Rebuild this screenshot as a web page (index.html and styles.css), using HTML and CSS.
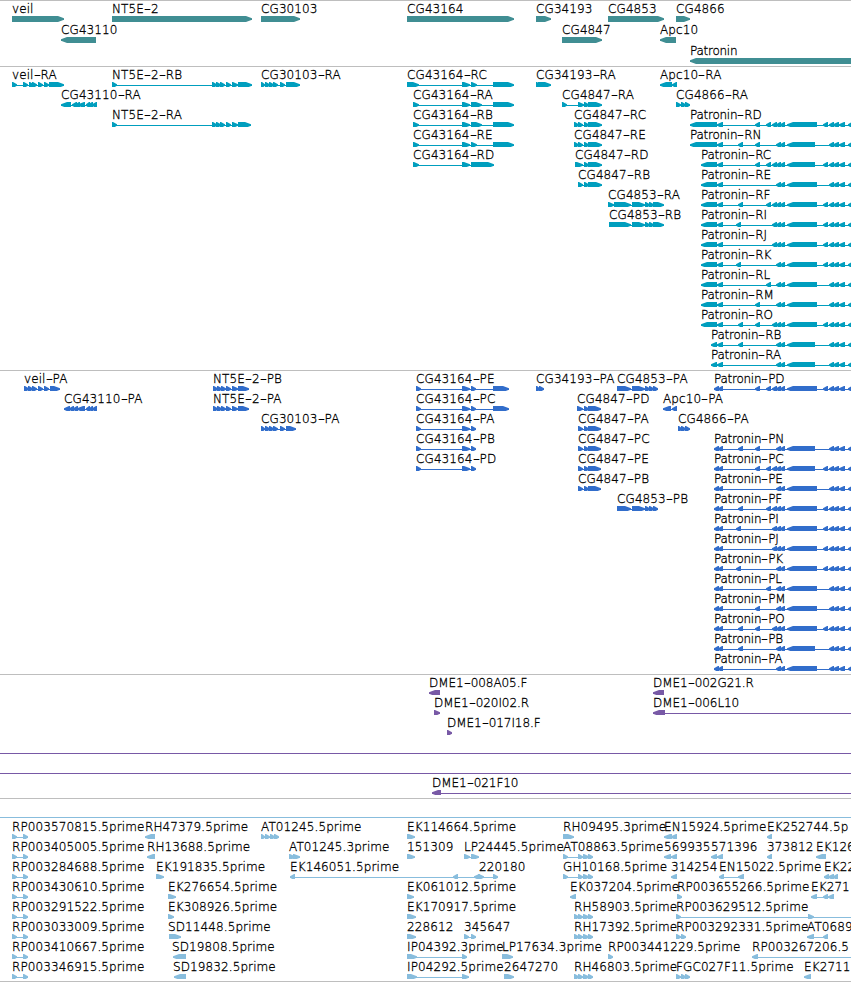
FILE: index.html
```html
<!DOCTYPE html>
<html lang="en">
<head>
  <meta charset="UTF-8">
  <meta name="viewport" content="width=device-width, initial-scale=1.0">
  <title>Genome Browser</title>
  <link rel="stylesheet" href="styles.css">
</head>
<body>
  <!-- One section per track, rows are filled in by tracks.js -->
  <main class="browser">
    <section class="track genes" id="genes"></section>
    <section class="track transcripts" id="transcripts"></section>
    <section class="track proteins" id="proteins"></section>
    <section class="track clones" id="clones"></section>
    <section class="track ests" id="ests"></section>
  </main>
  <script src="tracks.js"></script>
</body>
</html>
```
FILE: styles.css
```css
body {
  margin: 0;
  background-color: #fff;
  color: #000;
  font-family: "DejaVu Sans Light", "DejaVu Sans", sans-serif;
  font-size: 12px;
}

.browser {
  display: flex;
  flex-direction: column;
  overflow: hidden;
}

/* Tracks are split by a thin grey rule */
.track {
  border-top: 1px solid #bebebe;
  padding-bottom: 3px;
}

.genes {
  color: #408e93;
  padding-bottom: 2px;
}

.transcripts {
  color: #009ebe;
}

.proteins {
  color: #316dcb;
}

.clones {
  color: #7859a6;
}

.ests {
  color: #88bddd;
  border-bottom: 1px solid #bebebe;
  padding-bottom: 2px;
}

/* A row holds the names with their glyphs underneath */
.row {
  position: relative;
  height: 20px;
  overflow: hidden;
}

.genes .row {
  height: 21px;
}

.name {
  position: absolute;
  top: 1px;
  color: #000;
  line-height: 14px;
  letter-spacing: 0.1px;
  white-space: nowrap;
  -webkit-text-stroke: 0.3px #000;
}

.name.tight {
  letter-spacing: -0.25px;
}

.clones .name {
  letter-spacing: -0.05px;
}

/* Long dash between gene name and isoform */
.dash {
  display: inline-block;
  width: 7px;
  text-align: center;
  letter-spacing: 0;
  transform: scaleX(1.6);
}

.glyphs {
  display: block;
  width: 100%;
  height: 6px;
  padding-top: 15px;
  fill: currentColor;
  overflow: visible;
}
```
FILE: tracks.js
```js
const SVG_NS = 'http://www.w3.org/2000/svg';
const EDGE = 860; // just past the right side of the view

// Shared exon sets
const NT5E = '212-217 216-221 220-225 226-231 232-238 238-';
const NT5E_CDS = '213-218 217-222 221-226 226-231 232-238 238-249';
const CG4847_END = ' 584-589 588-602';
const CG4847_CDS = '578-583 584-589 588-601';
const CG4853_MID = ' 632-645 645-650 649-654 ';
const RP_PAIR = '12-17 23-28';
const RH_SET = '574-579 578-583 583-589 588-593';
const AT_SET = '563-568 578-583 583-589 588-593';

// Feature: [name, x, strand, exons, line end]
function patronin(name, x, middle, bodyEnd, extra) {
  const starts = { 690: '690-717 717-723', 701: '701-717 717-723', 711: '711-717 717-723', 714: '714-719 718-723' };
  const small = middle.map((m) => `${m}-${m + 5} `).join('');
  const tail = (extra ? '823-828 ' : '') + '829-834 833-839 839-845 848-853';
  return ['Patronin-' + name, x, '-', `${starts[x]} ${small}776-781 780-785 787-${bodyEnd} ${tail}`, EDGE];
}

const tracks = {
  genes: [
    [['veil', 12, '+', '12-64'], ['NT5E-2', 112, '+', '112-252'], ['CG30103', 261, '+', '261-300'],
     ['CG43164', 407, '+', '407-514'], ['CG34193', 536, '+', '536-551'], ['CG4853', 608, '+', '608-664'],
     ['CG4866', 676, '+', '676-690']],
    [['CG43110', 61, '-', '61-96'], ['CG4847', 562, '+', '562-602'], ['Apc10', 660, '-', '660-676']],
    [['Patronin', 690, '-', '690-860']]
  ],
  transcripts: [
    [['veil-RA', 12, '+', '12-17 23-28 29-34 32-37 38-43 44-49 49-64'], ['NT5E-2-RB', 112, '+', '112-117 ' + NT5E + '252'],
     ['CG30103-RA', 261, '+', '261-265 265-270 269-274 273-278 280-285 286-300'],
     ['CG43164-RC', 407, '+', '407-419 462-470 471-477 493-514'], ['CG34193-RA', 536, '+', '536-540 538-551'],
     ['Apc10-RA', 660, '-', '660-672 672-677']],
    [['CG43110-RA', 61, '-', '61-71 72-77 75-80 78-85 86-90 88-93 92-97'],
     ['CG43164-RA', 413, '+', '413-419 462-470 471-482 493-514'],
     ['CG4847-RA', 562, '+', '562-567 578-584' + CG4847_END], ['CG4866-RA', 676, '+', '676-681 681-686 685-690']],
    [['NT5E-2-RA', 112, '+', '112-117 ' + NT5E + '251'], ['CG43164-RB', 413, '+', '413-419 462-470 471-482 493-514'],
     ['CG4847-RC', 574, '+', '574-579 578-583' + CG4847_END], patronin('RD', 690, [755, 766, 772], 817, true)],
    [['CG43164-RE', 413, '+', '413-419 462-470 471-477 493-514'],
     ['CG4847-RE', 574, '+', '574-579 578-583' + CG4847_END], patronin('RN', 690, [738, 755], 815, false)],
    [['CG43164-RD', 413, '+', '413-419 462-470 471-494'],
     ['CG4847-RD', 575, '+', '575-583' + CG4847_END], patronin('RC', 701, [755, 766, 772], 815, true)],
    [['CG4847-RB', 578, '+', '578-583' + CG4847_END], patronin('RE', 701, [], 817, false)],
    [['CG4853-RA', 608, '+', '608-614 614-631' + CG4853_MID + '653-664'], patronin('RF', 701, [738, 766, 772], 817, true)],
    [['CG4853-RB', 609, '+', '609-631' + CG4853_MID + '653-664'], patronin('RI', 701, [736, 772], 817, true)],
    [patronin('RJ', 701, [772], 817, true)],
    [patronin('RK', 701, [736], 817, true)],
    [patronin('RL', 701, [766], 817, false)],
    [patronin('RM', 701, [755], 817, false)],
    [patronin('RO', 701, [738, 755, 772], 817, true)],
    [patronin('RB', 711, [738], 815, false)],
    [patronin('RA', 711, [], 815, false)]
  ],
  proteins: [
    [['veil-PA', 24, '+', '24-29 28-33 32-37 38-43 44-49 50-60'], ['NT5E-2-PB', 213, '+', NT5E_CDS],
     ['CG43164-PE', 416, '+', '416-421 462-470 471-476 493-509'], ['CG34193-PA', 536, '+', '536-540 539-544'],
     ['CG4853-PA', 617, '+', '617-631' + CG4853_MID + '653-658'], patronin('PD', 714, [755, 766, 772], 817, true)],
    [['CG43110-PA', 64, '-', '64-70 69-74 73-78 77-85 86-90 89-93 92-97'], ['NT5E-2-PA', 213, '+', NT5E_CDS],
     ['CG43164-PC', 416, '+', '416-421 462-470 471-476 493-509'], ['CG4847-PD', 577, '+', '577-583 584-589 588-601'],
     ['Apc10-PA', 663, '-', '663-671 672-677']],
    [['CG30103-PA', 261, '+', '261-265 265-270 269-274 273-278 280-285 286-296'],
     ['CG43164-PA', 416, '+', '416-421 462-470 471-476'], ['CG4847-PA', 578, '+', CG4847_CDS],
     ['CG4866-PA', 678, '+', '678-682 681-686 685-690']],
    [['CG43164-PB', 416, '+', '416-421 462-470 471-476'], ['CG4847-PC', 578, '+', CG4847_CDS],
     patronin('PN', 714, [738, 755], 815, false)],
    [['CG43164-PD', 416, '+', '416-421 462-470 471-476'], ['CG4847-PE', 578, '+', CG4847_CDS],
     patronin('PC', 714, [755, 766, 772], 815, true)],
    [['CG4847-PB', 578, '+', CG4847_CDS], patronin('PE', 714, [], 817, false)],
    [['CG4853-PB', 617, '+', '617-631' + CG4853_MID + '653-658'], patronin('PF', 714, [738, 766, 772], 817, true)],
    [patronin('PI', 714, [736, 772], 817, true)],
    [patronin('PJ', 714, [772], 817, true)],
    [patronin('PK', 714, [736], 817, true)],
    [patronin('PL', 714, [766], 817, false)],
    [patronin('PM', 714, [755], 817, false)],
    [patronin('PO', 714, [738, 755, 772], 817, true)],
    [patronin('PB', 714, [738], 815, false)],
    [patronin('PA', 714, [], 817, false)]
  ],
  clones: [
    [['DME1-008A05.F', 429, '-', '429-440'], ['DME1-002G21.R', 653, '-', '653-664']],
    [['DME1-020I02.R', 434, '+', '434-440'], ['DME1-006L10', 653, '-', '653-665', EDGE]],
    [['DME1-017I18.F', 447, '+', '447-452']],
    [['', 0, '+', '', EDGE]],
    [['', 0, '+', '', EDGE]],
    [['DME1-021F10', 432, '-', '432-441', EDGE]]
  ],
  ests: [
    [['', 0, '+', '', EDGE]],
    [['RP003570815.5prime', 12, '+', RP_PAIR], ['RH47379.5prime', 145, '-', '145-155'],
     ['AT01245.5prime', 261, '+', '261-265 265-270 270-275 274-279'], ['EK114664.5prime', 407, '+', '407-415'],
     ['RH09495.3prime', 563, '+', '563-574'], ['EN15924.5prime', 664, '-', '664-672 671-677'],
     ['EK252744.5p', 767, '-', '767-772']],
    [['RP003405005.5prime', 12, '+', RP_PAIR], ['RH13688.5prime', 147, '-', '147-155'],
     ['AT01245.3prime', 289, '+', '289-295 293-300'], ['151309', 407, '+', '407-415'],
     ['LP24445.5prime', 464, '+', '464-470 471-479'], ['AT08863.5prime', 563, '+', AT_SET],
     ['569935', 664, '-', '664-671 671-677'], ['571396', 711, '-', '711-717 717-723'],
     ['373812', 767, '-', '767-772'], ['EK126', 816, '-', '816-826']],
    [['RP003284688.5prime', 12, '+', RP_PAIR], ['EK191835.5prime', 156, '+', '156-164'],
     ['EK146051.5prime', 290, '-', '290-295 453-458 474-480'], ['220180', 479, '+', '478-484 493-498'],
     ['GH10168.5prime', 563, '+', AT_SET], ['314254', 671, '-', '671-677'],
     ['EN15022.5prime', 719, '-', '719-724 738-744'], ['EK22', 824, '-', '824-829 828-834 833-838']],
    [['RP003430610.5prime', 12, '+', RP_PAIR], ['EK276654.5prime', 168, '+', '168-176'],
     ['EK061012.5prime', 407, '+', '407-414'], ['EK037204.5prime', 570, '-', '570-576'],
     ['RP003655266.5prime', 677, '+', '677-682'], ['EK271', 811, '-', '811-817 823-828 828-834']],
    [['RP003291522.5prime', 12, '+', RP_PAIR], ['EK308926.5prime', 168, '+', '168-174'],
     ['EK170917.5prime', 407, '+', '407-416'], ['RH58903.5prime', 574, '+', RH_SET],
     ['RP003629512.5prime', 676, '+', '676-681 808-814', EDGE]],
    [['RP003033009.5prime', 12, '+', RP_PAIR], ['SD11448.5prime', 168, '+', '169-181'],
     ['228612', 407, '+', '407-416'], ['345647', 464, '+', '464-469 471-476'],
     ['RH17392.5prime', 574, '+', RH_SET], ['RP003292331.5prime', 676, '+', '676-681 681-686'],
     ['AT0689', 807, '-', '807-814 823-828']],
    [['RP003410667.5prime', 12, '+', RP_PAIR], ['SD19808.5prime', 172, '-', '173-186'],
     ['IP04392.3prime', 407, '+', '407-417 462-467'], ['LP17634.3prime', 502, '+', '502-513'],
     ['RP003441229.5prime', 608, '+', '608-613'], ['RP003267206.5', 752, '-', '752-758', EDGE]],
    [['RP003346915.5prime', 12, '+', RP_PAIR], ['SD19832.5prime', 173, '-', '174-186'],
     ['IP04292.5prime', 407, '+', '407-417 462-469'], ['2647270', 504, '+', '504-514'],
     ['RH46803.5prime', 574, '+', RH_SET], ['FGC027F11.5prime', 676, '+', '676-681 681-686 685-690'],
     ['EK2711', 804, '-', '804-811']]
  ]
};

// Box with a blunt arrow head on the strand side, short exons are mostly head
function exonPoints(start, end, strand) {
  const head = Math.min(6, end - start - 1);
  if (strand === '+') {
    return `${start},0 ${end - head},0 ${end},2.2 ${end},3.8 ${end - head},6 ${start},6`;
  }
  return `${end},0 ${start + head},0 ${start},2.2 ${start},3.8 ${start + head},6 ${end},6`;
}

function drawLabel(row, name, x) {
  const label = document.createElement('span');
  label.className = name.startsWith('Patronin') ? 'name tight' : 'name';
  label.style.left = x + 'px';
  label.innerHTML = name.replace(/-/g, '<span class="dash">-</span>');
  row.appendChild(label);
}

function drawFeature(row, svg, feature) {
  const [name, x, strand, exonText, lineEnd] = feature;
  const exons = exonText ? exonText.split(' ').map((e) => e.split('-').map(Number)) : [];
  const from = exons.length ? exons[0][0] : x;
  const to = lineEnd || exons[exons.length - 1][1];

  // Intron line
  const line = document.createElementNS(SVG_NS, 'rect');
  line.setAttribute('x', from);
  line.setAttribute('y', 3);
  line.setAttribute('width', to - from);
  line.setAttribute('height', 1);
  svg.appendChild(line);

  exons.forEach(([start, end]) => {
    const exon = document.createElementNS(SVG_NS, 'polygon');
    exon.setAttribute('points', exonPoints(start, end, strand));
    svg.appendChild(exon);
  });

  if (name) {
    drawLabel(row, name, x);
  }
}

Object.keys(tracks).forEach((id) => {
  const track = document.getElementById(id);
  tracks[id].forEach((features) => {
    const row = document.createElement('div');
    row.className = 'row';
    const svg = document.createElementNS(SVG_NS, 'svg');
    svg.setAttribute('class', 'glyphs');
    row.appendChild(svg);
    features.forEach((feature) => drawFeature(row, svg, feature));
    track.appendChild(row);
  });
});
```
